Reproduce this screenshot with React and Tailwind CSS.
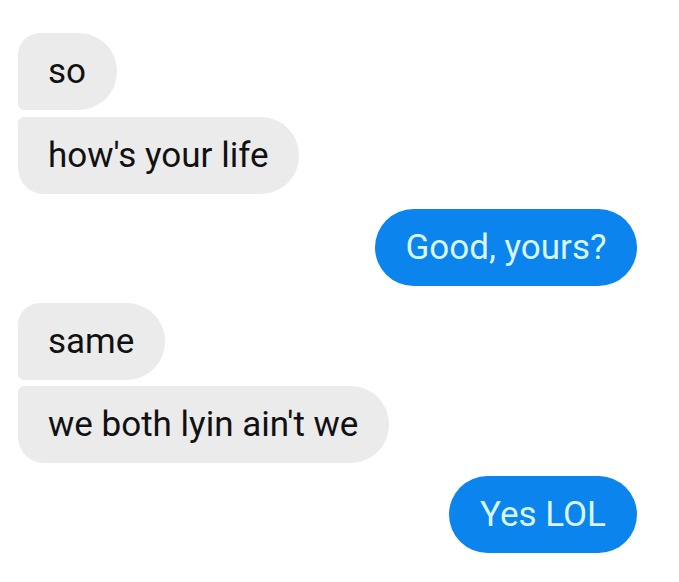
import React from "react";

const messages = [
  { text: "so", me: false, shape: "rounded-tl-[22px] rounded-bl-[6px] rounded-r-[38px]", gap: "mt-[33px]" },
  { text: "how's your life", me: false, shape: "rounded-tl-[6px] rounded-bl-[26px] rounded-r-[38px]", gap: "mt-[7px]" },
  { text: "Good, yours?", me: true, shape: "rounded-[39px]", gap: "mt-[15px]", w: "w-[262px]" },
  { text: "same", me: false, shape: "rounded-tl-[22px] rounded-bl-[6px] rounded-r-[38px]", gap: "mt-[17px]" },
  { text: "we both lyin ain't we", me: false, shape: "rounded-tl-[6px] rounded-bl-[26px] rounded-r-[38px]", gap: "mt-[6px]" },
  { text: "Yes LOL", me: true, shape: "rounded-[39px]", gap: "mt-[13px]", w: "w-[188px]" },
];

const Bubble = ({ msg }) => (
  <div className={`flex ${msg.me ? "justify-end" : "justify-start"} ${msg.gap}`}>
    <div
      className={`h-[77px] flex items-center whitespace-nowrap ${msg.me ? "justify-center" : "pl-[30px] pr-[31px]"} ${msg.w || ""} ${msg.shape} ${
        msg.me ? "bg-[#0b84ee] text-[#d8f6ff]" : "bg-[#ebebeb] text-[#111]"
      } text-[35px] leading-none`}
    >
      {msg.text}
    </div>
  </div>
);

export default function App() {
  return (
    <div
      className="w-[679px] h-[582px] bg-white pl-[18px] pr-[42px] overflow-hidden"
      style={{ fontFamily: "Roboto, 'Liberation Sans', sans-serif" }}
    >
      {messages.map((m, i) => (
        <Bubble key={i} msg={m} />
      ))}
    </div>
  );
}
